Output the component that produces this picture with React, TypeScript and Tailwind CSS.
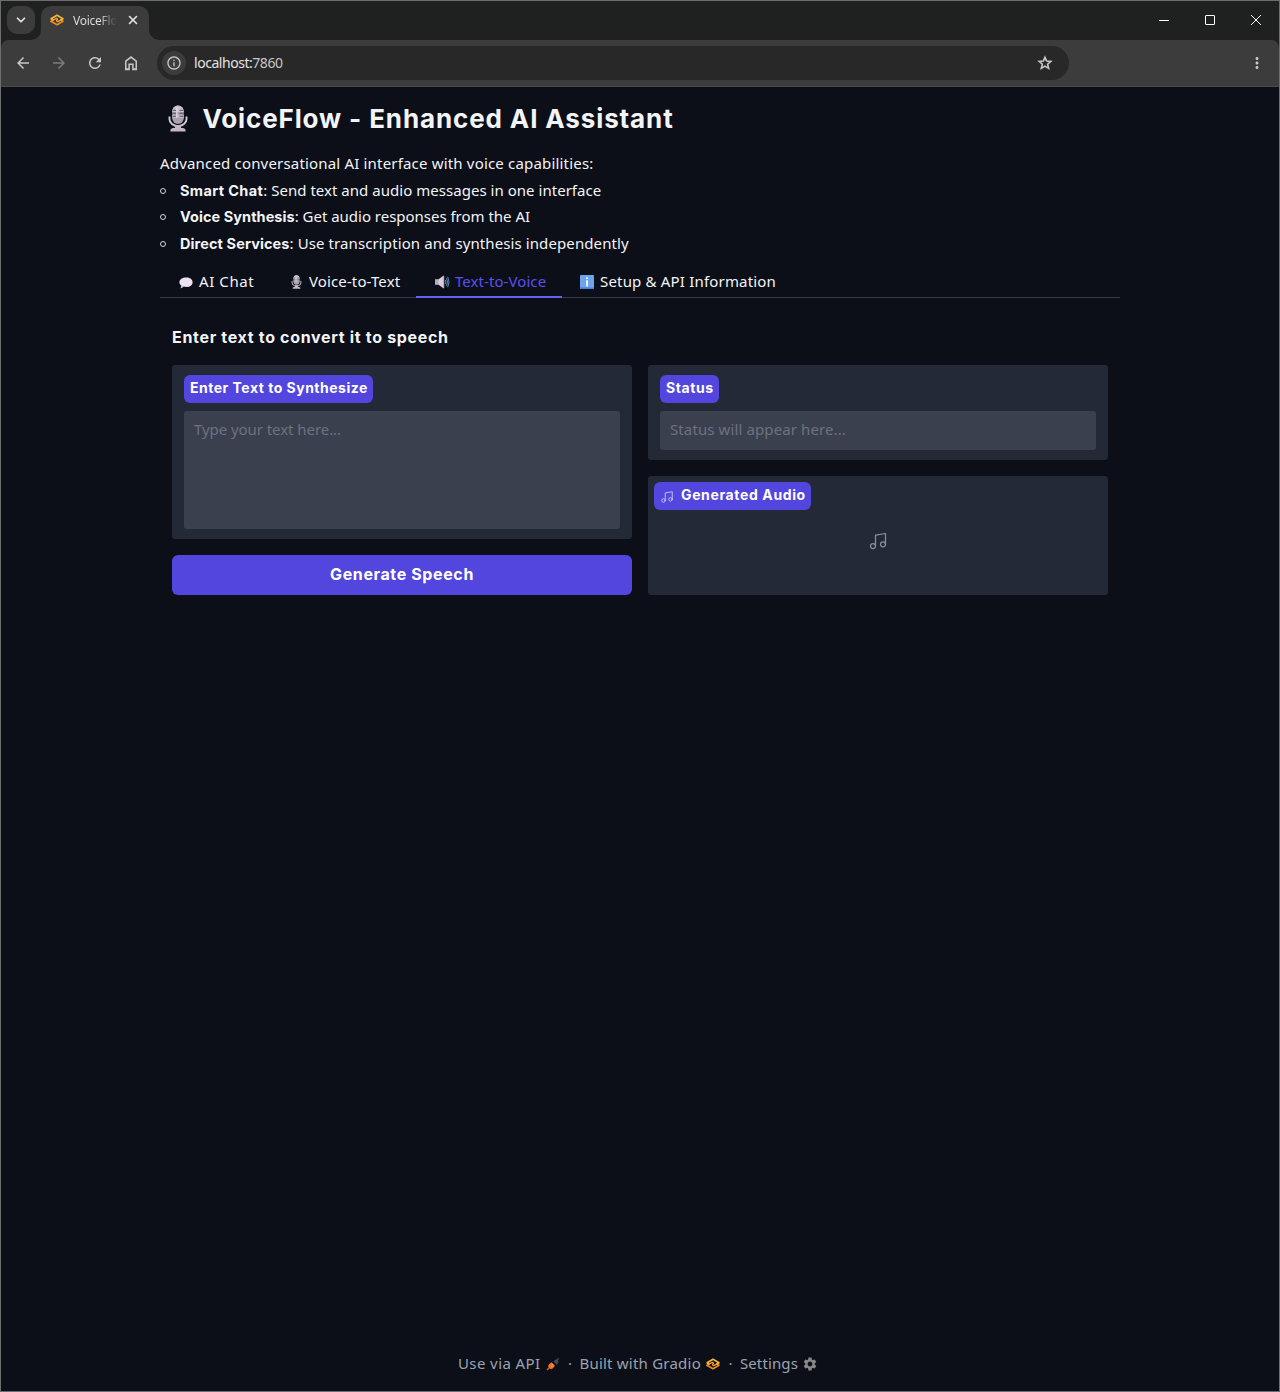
import type { ReactNode } from 'react'
import { ChevronDown, Music, X } from 'lucide-react'
import {
  MdArrowBack,
  MdArrowForward,
  MdInfoOutline,
  MdMoreVert,
  MdRefresh,
  MdSettings,
} from 'react-icons/md'

const BOLD = "font-['Inter','Liberation_Sans',sans-serif] font-bold"

function GradioLogo({ className }: { className: string }) {
  return (
    <svg viewBox="0 0 28 24" className={className} fill="none" strokeLinejoin="round" strokeLinecap="round">
      <path d="M2 14.500 14 21.500 26 14.500 21.500 12" stroke="#f08a24" strokeWidth="3" />
      <path d="M6.500 12 2 9.500 14 2.500 26 9.500 21.500 12" stroke="#fbb53a" strokeWidth="3" />
      <path d="M2 14.500 6.500 12 12.500 8.700 15 10.200 13 13.800 15.500 15.300 21.500 12" stroke="#f9a62b" strokeWidth="2.400" />
    </svg>
  )
}

function MicEmoji({ className }: { className: string }) {
  return (
    <svg viewBox="0 0 20 27" className={className} fill="none">
      <rect x="4.2" y="0.5" width="11.6" height="18.5" rx="5.8" fill="#aaa0ae" />
      <path d="M4.2 7V6.3a5.8 5.8 0 0 1 11.6 0V7Z" fill="#c9c1cc" />
      <path d="M4.2 10h11.6v3H4.2Z" fill="#c3bac8" />
      <path d="M4.500 8.300h4M11.500 8.300h4M4.500 11.300h4M11.500 11.300h4M4.500 5.300h4M11.500 5.300h4" stroke="#5c5266" strokeWidth="1" />
      <path d="M8.800 2.500v10" stroke="#e4dfe6" strokeWidth="1.200" />
      <path d="M1.500 11.500v2.700a8.500 6.900 0 0 0 17 0v-2.700" stroke="#d3cad6" strokeWidth="1.900" />
      <path d="M7 20h6v3h2a3 3 0 0 1 2.500 3.600H2.500A3 3 0 0 1 5 23H7Z" fill="#c4b8c6" />
    </svg>
  )
}

function BubbleEmoji() {
  return (
    <svg viewBox="0 0 14 12" className="mt-0.5 h-3 w-3.5">
      <path d="M7.2 .5c3.8 0 6.4 2 6.4 4.7S11 10 7.2 10c-.9 0-1.700-.1-2.500-.4-.8.9-1.900 1.500-3.200 1.700.6-.8.9-1.700.8-2.700C1 7.700.4 6.500.4 5.200.4 2.500 3.400.5 7.200.5Z" fill="#ece2f3" />
      <path d="M2.300 8.500c2.500 1.500 7.500 1.500 10.200-.8C11.400 9.200 9.500 10 7.200 10c-.9 0-1.700-.1-2.500-.4-.8.9-1.900 1.500-3.200 1.700.6-.8.9-1.700.8-2.800Z" fill="#c9b6d8" />
    </svg>
  )
}

function SpeakerEmoji() {
  return (
    <svg viewBox="0 0 15 14" className="mt-px ml-px h-3.5 w-[15px]" fill="none">
      <path d="M0 4.200h4v5.600H0Z" fill="#b5adba" />
      <path d="M3.600 4.200 8.400.8v12.400L3.600 9.800Z" fill="#d8d1dc" />
      <path d="M7.800.8h1.400v12.400H7.800Z" fill="#b7afbc" />
      <path d="M10.300 5q1.100 2 0 4M11.500 3.200q2 3.800 0 7.600M12.700 1.800q2.700 5.200 0 10.400" stroke="#5b9bd5" strokeWidth="0.900" />
    </svg>
  )
}

function InfoEmoji() {
  return (
    <svg viewBox="0 0 14 14" className="size-3.5">
      <rect width="14" height="14" rx="1" fill="#6ea3ee" />
      <path d="M0 12.500h14V13a1 1 0 0 1-1 1H1a1 1 0 0 1-1-1Z" fill="#4c80d0" />
      <path d="M6.200 2.300h1.700V4H6.200ZM6.200 5.300h1.700v6.200H6.200Z" fill="#fff" />
    </svg>
  )
}

function PlugIcon() {
  return (
    <svg viewBox="0 0 14 14" className="size-3.5" fill="none">
      <path d="M11 3 12.300 1.700" stroke="#414957" strokeWidth="1.500" strokeLinecap="round" />
      <path d="M7.500 4.500 9 3a2.300 2.300 0 0 1 3.200 3.100L10.500 7.700Z" fill="#414957" />
      <path d="M5.500 5.300 9 8.800 7.300 10.800a2.900 2.900 0 0 1-4.200.2 2.900 2.900 0 0 1 .2-4Z" fill="#f37726" />
      <path d="M3 11 1.500 12.500" stroke="#d9601a" strokeWidth="1.500" strokeLinecap="round" />
      <path d="m5.800 8.200 1-1" stroke="#fcb277" strokeWidth="1" />
    </svg>
  )
}

function HomeIcon() {
  return (
    <svg viewBox="0 0 24 24" className="size-[18px]" fill="currentColor">
      <path d="M6 19h2.500v-6.500h7V19H18v-9l-6-4.500L6 10Zm-2 2.500V9l8-6.500L20 9v12.500h-6.500v-7h-3v7Z" />
    </svg>
  )
}

function StarIcon() {
  return (
    <svg viewBox="0 0 18 18" className="ml-auto size-[18px]" fill="none" stroke="currentColor" strokeWidth="1.600">
      <path d="m9 3.200 1.650 3.850 4.200.4-3.200 2.750 1 4.150L9 12.150l-3.650 2.200 1-4.150-3.200-2.750 4.200-.4Z" />
    </svg>
  )
}

function TitleBar() {
  return (
    <div className="flex h-[39px] items-end bg-[#1f2120] pl-1.5 text-[#e3e3e3]">
      <div className="mb-1.5 flex size-7 items-center justify-center rounded-[10px] bg-[#3c3c3c]">
        <ChevronDown className="size-3.5" strokeWidth={3} />
      </div>
      <div className="relative ml-1.5 flex h-[34px] w-[108px] items-center rounded-t-[10px] bg-[#3c3c3c] pb-1.5 pl-[9px]">
        <svg viewBox="0 0 10 10" className="absolute bottom-0 -left-2.5 size-2.5">
          <path d="M10 0v10H0A10 10 0 0 0 10 0Z" fill="#3c3c3c" />
        </svg>
        <svg viewBox="0 0 10 10" className="absolute -right-2.5 bottom-0 size-2.5">
          <path d="M0 0v10h10A10 10 0 0 1 0 0Z" fill="#3c3c3c" />
        </svg>
        <GradioLogo className="h-3 w-3.5" />
        <span className="mt-0.5 ml-[9px] w-11 overflow-hidden bg-gradient-to-r from-[#e3e3e3] from-60% to-[#3c3c3c] bg-clip-text text-xs tracking-[-0.25px] whitespace-nowrap text-transparent">
          VoiceFlo
        </span>
        <X className="ml-[9px] size-3.5" strokeWidth={2.8} />
      </div>
      <div className="mb-px ml-auto flex h-[38px] items-center text-white">
        <div className="flex w-[46px] justify-center"><div className="h-px w-2.5 bg-white" /></div>
        <div className="flex w-[46px] justify-center"><div className="size-2.5 rounded-[1px] border border-white" /></div>
        <div className="flex w-[46px] justify-center">
          <svg viewBox="0 0 10 10" className="size-2.5" stroke="currentColor"><path d="m0 0 10 10M10 0 0 10" /></svg>
        </div>
      </div>
    </div>
  )
}

function Toolbar() {
  return (
    <div className="bg-[#1f2120]">
      <div className="flex h-[47px] items-center rounded-t-lg border-b border-[#4a4a4a] bg-[#3c3c3c] pl-[13px] text-[#c7c7c7]">
        <MdArrowBack className="size-[18px]" />
        <MdArrowForward className="ml-[18px] size-[18px] text-[#7b7b7b]" />
        <MdRefresh className="ml-[18px] size-[18px]" />
        <div className="ml-[18px]"><HomeIcon /></div>
        <div className="ml-[17px] flex h-[34px] w-[912px] items-center rounded-full bg-[#282828] pr-[15px] pl-[5px]">
          <div className="flex size-6 items-center justify-center rounded-full bg-[#3c3c3c]">
            <MdInfoOutline className="size-4" />
          </div>
          <span className="ml-2 text-sm tracking-[-0.46px] text-[#e3e3e3]">
            localhost:<span className="text-[#c7c7c7]">7860</span>
          </span>
          <StarIcon />
        </div>
        <MdMoreVert className="mr-[13px] ml-auto size-[18px]" />
      </div>
    </div>
  )
}

function Label({ children, className = '' }: { children: ReactNode; className?: string }) {
  return (
    <div className={`flex h-7 w-fit items-center rounded-md bg-[#5246de] pr-[5px] pb-0.5 pl-1.5 text-sm whitespace-nowrap text-white ${BOLD} ${className}`}>
      {children}
    </div>
  )
}

const features = [
  { name: 'Smart Chat', height: 'h-[26px]', nameTracking: 'tracking-[0.36px]', text: ': Send text and audio messages in one interface', tracking: 'tracking-[0.03px]' },
  { name: 'Voice Synthesis', height: 'h-[27px]', nameTracking: 'tracking-[0.06px]', text: ': Get audio responses from the AI', tracking: 'tracking-[-0.02px]' },
  { name: 'Direct Services', height: 'h-[27px]', nameTracking: 'tracking-[0.1px]', text: ': Use transcription and synthesis independently', tracking: 'tracking-[0.1px]' },
]

export default function App() {
  return (
    <div className="flex h-[1392px] w-[1280px] flex-col border border-[#6b6e6d] bg-[#0c0f18] font-['Noto_Sans','Open_Sans',sans-serif] text-[15px] text-[#f3f4f6]">
      <TitleBar />
      <Toolbar />
      <main className="mx-auto flex w-[960px] flex-1 flex-col">
        <h1 className={`mt-3 flex h-[38px] items-center text-[26px] tracking-[0.88px] ${BOLD}`}>
          <MicEmoji className="mr-4 ml-2 h-[27px] w-5" />
          <span className="-ml-[1.500px] whitespace-nowrap">VoiceFlow - Enhanced AI Assistant</span>
        </h1>
        <p className="mt-[13px] h-[27px] leading-[27px] tracking-[0.18px]">
          Advanced conversational AI interface with voice capabilities:
        </p>
        <ul>
          {features.map((f) => (
            <li key={f.name} className={`flex items-start leading-[26px] whitespace-pre ${f.height}`}>
              <span className="mt-[11px] mr-[14px] size-1.5 rounded-full border border-[#d4d6da]" />
              <span className="h-[26px]">
                <span className={`text-[14.5px] ${f.nameTracking} ${BOLD}`}>{f.name}</span>
                <span className={f.tracking}>{f.text}</span>
              </span>
            </li>
          ))}
        </ul>

        <nav className="mt-[9px] flex h-8 border-b border-[#363b48] whitespace-nowrap">
          <div className="flex w-28 items-center pl-[19px]">
            <BubbleEmoji />
            <span className="ml-1.5 tracking-[0.6px]">AI Chat</span>
          </div>
          <div className="flex w-36 items-center pl-[19px]">
            <MicEmoji className="h-3.5 w-[11px]" />
            <span className="ml-[7px] tracking-[0.12px]">Voice-to-Text</span>
          </div>
          <div className="-mb-px flex w-[146px] items-center border-b-2 border-[#6366f1] pt-px pl-[18px] text-[#5a50ee]">
            <SpeakerEmoji />
            <span className="ml-[5px] tracking-[0.07px]">Text-to-Voice</span>
          </div>
          <div className="flex items-center pl-[18px]">
            <InfoEmoji />
            <span className="ml-1.5 tracking-[0.18px]">Setup &amp; API Information</span>
          </div>
        </nav>

        <section className="px-3 pt-[27px]">
          <h3 className={`h-6 text-base leading-6 tracking-[0.68px] ${BOLD}`}>Enter text to convert it to speech</h3>
          <div className="mt-4 grid grid-cols-2 gap-4">
            <div className="flex flex-col gap-4">
              <div className="h-[174px] rounded-[3px] bg-[#232936] px-3 pt-2.5">
                <Label className="tracking-[0.5px]">Enter Text to Synthesize</Label>
                <div className="mt-2 h-[118px] rounded-[3px] bg-[#3b404f] px-2.5 pt-[7px] leading-[22px] tracking-[-0.06px] text-[#6b7280]">
                  Type your text here...
                </div>
              </div>
              <button className={`h-10 rounded-md bg-[#5246de] pb-0.5 text-base tracking-[0.62px] text-white ${BOLD}`}>
                Generate Speech
              </button>
            </div>
            <div className="flex flex-col gap-4">
              <div className="h-[95px] rounded-[3px] bg-[#232936] px-3 pt-2.5">
                <Label className="tracking-[0.6px]">Status</Label>
                <div className="mt-2 h-[39px] rounded-[3px] bg-[#3b404f] px-2.5 pt-[7px] leading-[22px] tracking-[0.11px] text-[#6b7280]">
                  Status will appear here...
                </div>
              </div>
              <div className="flex h-[119px] flex-col rounded-[3px] bg-[#232936] p-1.5">
                <Label className="tracking-[0.63px]">
                  <Music className="mt-1 mr-[7px] size-3.5 text-[#c3bef5]" strokeWidth={1.7} />
                  Generated Audio
                </Label>
                <Music className="mx-auto mt-[21px] size-5 text-[#8a8f99]" strokeWidth={1.5} />
              </div>
            </div>
          </div>
        </section>

        <footer className="mt-auto mb-[17px] flex h-[22px] items-center pl-[298px] whitespace-nowrap text-[#9ca3af]">
          <span className="tracking-[0.4px]">Use via API</span>
          <span className="mt-0.5 ml-1.5"><PlugIcon /></span>
          <span className="ml-[7px] w-[5px] text-center">·</span>
          <span className="ml-[7px] tracking-[0.22px]">Built with Gradio</span>
          <GradioLogo className="mt-px ml-[5px] h-3 w-3.5" />
          <span className="ml-[8px] w-[5px] text-center">·</span>
          <span className="ml-[7px] tracking-[0.12px]">Settings</span>
          <MdSettings className="mt-0.5 ml-1 size-4 text-[#888]" />
        </footer>
      </main>
    </div>
  )
}
